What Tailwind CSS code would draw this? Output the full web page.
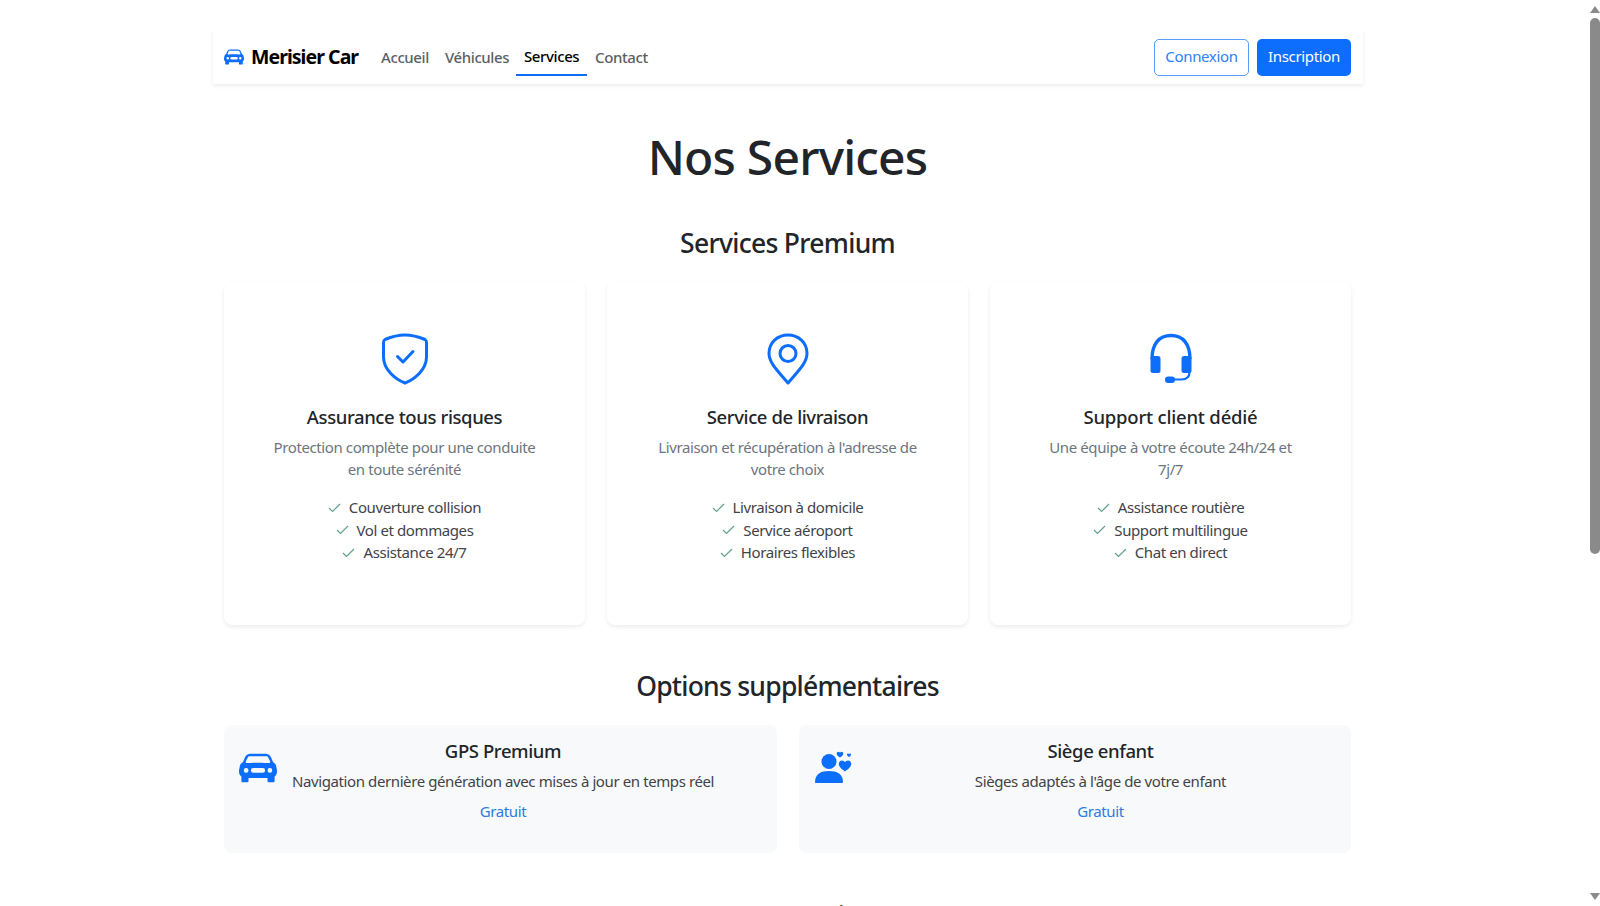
<!doctype html>
<html lang="fr">
<head>
<meta charset="utf-8">
<script src="https://cdn.jsdelivr.net/npm/@tailwindcss/browser@4"></script>
<title>Nos Services</title>
</head>
<body class="bg-white h-[906px] overflow-hidden relative font-['Noto_Sans','Open_Sans',sans-serif] text-[#212529] text-[16px]">
<div class="w-[1150px] ml-[213px]">
  <nav class="mt-[30px] h-[54px] bg-white shadow-[0_2px_4px_rgba(0,0,0,0.08)] flex items-center pl-[11px] pr-[12px]">
    <svg class="w-[20px] h-[20px] text-[#0d6efd]" viewBox="0 0 16 16" fill="currentColor"><path d="M2.52 3.515A2.5 2.5 0 0 1 4.82 2h6.362c1 0 1.904.596 2.298 1.515l.792 1.848c.075.175.21.319.38.404.5.25.855.715.965 1.262l.335 1.679q.05.242.049.49v.413c0 .814-.39 1.543-1 1.997V13.5a.5.5 0 0 1-.5.5h-2a.5.5 0 0 1-.5-.5v-1.338c-1.292.048-2.745.088-4 .088s-2.708-.04-4-.088V13.5a.5.5 0 0 1-.5.5h-2a.5.5 0 0 1-.5-.5v-1.892c-.61-.454-1-1.183-1-1.997v-.413a2.5 2.5 0 0 1 .049-.49l.335-1.68c.11-.546.465-1.012.964-1.261a.8.8 0 0 0 .381-.404l.792-1.848ZM3 10a1 1 0 1 0 0-2 1 1 0 0 0 0 2m10 0a1 1 0 1 0 0-2 1 1 0 0 0 0 2M6 8a1 1 0 0 0 0 2h4a1 1 0 1 0 0-2zM2.906 5.189a.51.51 0 0 0 .497.731c.91-.073 3.35-.17 4.597-.17s3.688.097 4.597.17a.51.51 0 0 0 .497-.731l-.956-1.913A.5.5 0 0 0 11.691 3H4.309a.5.5 0 0 0-.447.276L2.906 5.19Z"/></svg>
    <span class="ml-[7px] w-[108px] text-[19.500px] font-bold text-black tracking-[-0.95px] whitespace-nowrap">Merisier Car</span>
    <div class="ml-[15px] flex h-full text-[15px] font-medium text-[#5c5f62] tracking-[-0.4px]">
      <a class="px-[7px] pb-[2px] flex items-center mt-[10px] h-[36px] w-[63px] whitespace-nowrap">Accueil</a>
      <a class="px-[8px] pb-[2px] flex items-center mt-[10px] h-[36px] w-[79px] whitespace-nowrap">Véhicules</a>
      <a class="px-[8px] pb-[1px] flex items-center mt-[10px] h-[36px] w-[71px] whitespace-nowrap text-black border-b-2 border-[#0d6efd]">Services</a>
      <a class="px-[8px] pb-[2px] flex items-center mt-[10px] h-[36px] whitespace-nowrap">Contact</a>
    </div>
    <div class="ml-auto flex gap-[8px] text-[15px] tracking-[-0.35px]">
      <a class="w-[95px] h-[37px] pb-[1px] rounded-[5px] border border-[#5b9dfb] text-[#2c80f5] flex items-center justify-center">Connexion</a>
      <a class="w-[94px] h-[37px] pb-[1px] rounded-[5px] bg-[#0d6efd] text-white flex items-center justify-center">Inscription</a>
    </div>
  </nav>
  <main class="pl-[11px] pr-[12px]">
    <h1 class="mt-[44px] text-center text-[48px] leading-[58px] font-medium tracking-[-0.8px]">Nos Services</h1>
    <h2 class="mt-[40px] text-center text-[26.500px] leading-[34px] font-medium tracking-[-0.7px]">Services Premium</h2>
    <section class="mt-[22px] grid grid-cols-3 gap-[22px]">
      <article class="h-[343px] rounded-[8px] bg-white shadow-[0_2px_4px_rgba(0,0,0,0.08)] flex flex-col items-center pt-[51px]">
        <svg class="w-[48px] h-[52px]" viewBox="0 0 48 52" fill="none" stroke="#0d6efd" stroke-width="3" stroke-linecap="round" stroke-linejoin="round"><path d="M24 2c6 0 14 2 20 4.500 1.200 .6 1.500 1.500 1.500 3V24c0 12-11 22-21.500 26C13.500 46 2.500 36 2.500 24V9.500c0-1.500.3-2.400 1.500-3C10 4 18 2 24 2Z"/><path d="M16.500 23.500 22 29 32 18.500"/></svg>
        <h3 class="mt-[20px] text-[18.500px] leading-[24px] font-medium tracking-[-0.4px]">Assurance tous risques</h3>
        <p class="mt-[7px] w-[270px] text-center text-[15px] leading-[22px] text-[#6c757d] tracking-[-0.4px]">Protection complète pour une conduite en toute sérénité</p>
        <ul class="mt-[16px] text-[15px] leading-[22.500px] text-[#3f4348] tracking-[-0.4px] text-center">
          <li><svg class="inline w-[13px] h-[13px] mr-[8px] mb-[3px]" viewBox="0 0 13 13" fill="none" stroke="#5fa287" stroke-width="1.200"><path d="M1 7l3.500 3.500L12 3"/></svg>Couverture collision</li>
          <li><svg class="inline w-[13px] h-[13px] mr-[8px] mb-[3px]" viewBox="0 0 13 13" fill="none" stroke="#5fa287" stroke-width="1.200"><path d="M1 7l3.500 3.500L12 3"/></svg>Vol et dommages</li>
          <li><svg class="inline w-[13px] h-[13px] mr-[8px] mb-[3px]" viewBox="0 0 13 13" fill="none" stroke="#5fa287" stroke-width="1.200"><path d="M1 7l3.500 3.500L12 3"/></svg>Assistance 24/7</li>
        </ul>
      </article>
      <article class="h-[343px] rounded-[8px] bg-white shadow-[0_2px_4px_rgba(0,0,0,0.08)] flex flex-col items-center pt-[51px]">
        <svg class="w-[48px] h-[52px]" viewBox="0 0 48 52" fill="none" stroke="#0d6efd" stroke-width="3" stroke-linejoin="round"><path d="M24 50C14 38 5 30 5 20.500 5 9.500 13.500 2 24 2s19 7.500 19 18.500C43 30 34 38 24 50Z"/><circle cx="24" cy="20.500" r="8"/></svg>
        <h3 class="mt-[20px] text-[18.500px] leading-[24px] font-medium tracking-[-0.4px]">Service de livraison</h3>
        <p class="mt-[7px] w-[270px] text-center text-[15px] leading-[22px] text-[#6c757d] tracking-[-0.4px]">Livraison et récupération à l'adresse de votre choix</p>
        <ul class="mt-[16px] text-[15px] leading-[22.500px] text-[#3f4348] tracking-[-0.4px] text-center">
          <li><svg class="inline w-[13px] h-[13px] mr-[8px] mb-[3px]" viewBox="0 0 13 13" fill="none" stroke="#5fa287" stroke-width="1.200"><path d="M1 7l3.500 3.500L12 3"/></svg>Livraison à domicile</li>
          <li><svg class="inline w-[13px] h-[13px] mr-[8px] mb-[3px]" viewBox="0 0 13 13" fill="none" stroke="#5fa287" stroke-width="1.200"><path d="M1 7l3.500 3.500L12 3"/></svg>Service aéroport</li>
          <li><svg class="inline w-[13px] h-[13px] mr-[8px] mb-[3px]" viewBox="0 0 13 13" fill="none" stroke="#5fa287" stroke-width="1.200"><path d="M1 7l3.500 3.500L12 3"/></svg>Horaires flexibles</li>
        </ul>
      </article>
      <article class="h-[343px] rounded-[8px] bg-white shadow-[0_2px_4px_rgba(0,0,0,0.08)] flex flex-col items-center pt-[51px]">
        <svg class="w-[48px] h-[52px]" viewBox="0 0 48 52" fill="#0d6efd"><path d="M5 26C5 11 12 2.500 24 2.500S43 11 43 26" fill="none" stroke="#0d6efd" stroke-width="3.400"/><rect x="3.500" y="23" width="10" height="17" rx="2.500"/><rect x="34.500" y="23" width="10" height="17" rx="2.500"/><path d="M42.500 39c0 5-3 7.500-8 7.500h-8" fill="none" stroke="#0d6efd" stroke-width="2.200"/><rect x="18" y="43.500" width="10" height="6.500" rx="3.250"/></svg>
        <h3 class="mt-[20px] text-[18.500px] leading-[24px] font-medium tracking-[-0.2px]">Support client dédié</h3>
        <p class="mt-[7px] w-[270px] text-center text-[15px] leading-[22px] text-[#6c757d] tracking-[-0.4px]">Une équipe à votre écoute 24h/24 et 7j/7</p>
        <ul class="mt-[16px] text-[15px] leading-[22.500px] text-[#3f4348] tracking-[-0.4px] text-center">
          <li><svg class="inline w-[13px] h-[13px] mr-[8px] mb-[3px]" viewBox="0 0 13 13" fill="none" stroke="#5fa287" stroke-width="1.200"><path d="M1 7l3.500 3.500L12 3"/></svg>Assistance routière</li>
          <li><svg class="inline w-[13px] h-[13px] mr-[8px] mb-[3px]" viewBox="0 0 13 13" fill="none" stroke="#5fa287" stroke-width="1.200"><path d="M1 7l3.500 3.500L12 3"/></svg>Support multilingue</li>
          <li><svg class="inline w-[13px] h-[13px] mr-[8px] mb-[3px]" viewBox="0 0 13 13" fill="none" stroke="#5fa287" stroke-width="1.200"><path d="M1 7l3.500 3.500L12 3"/></svg>Chat en direct</li>
        </ul>
      </article>
    </section>
    <h2 class="mt-[44px] text-center text-[26.500px] leading-[34px] font-medium tracking-[-0.75px]">Options supplémentaires</h2>
    <section class="mt-[22px] grid grid-cols-2 gap-[22px]">
      <article class="h-[128px] rounded-[8px] bg-[#f8f9fa] flex pl-[15px] pt-[14px]">
        <svg class="w-[38px] h-[38px] mt-[10px] shrink-0 text-[#0d6efd]" viewBox="0 0 16 16" fill="currentColor"><path d="M2.520 3.515A2.500 2.500 0 0 1 4.820 2h6.362c1 0 1.904.596 2.298 1.515l.792 1.848c.075.175.21.319.38.404.5.25.855.715.965 1.262l.335 1.679q.05.242.049.49v.413c0 .814-.39 1.543-1 1.997V13.500a.5.5 0 0 1-.5.5h-2a.5.5 0 0 1-.5-.5v-1.338c-1.292.048-2.745.088-4 .088s-2.708-.04-4-.088V13.500a.5.5 0 0 1-.5.5h-2a.5.5 0 0 1-.5-.5v-1.892c-.61-.454-1-1.183-1-1.997v-.413a2.500 2.500 0 0 1 .049-.49l.335-1.680c.11-.546.465-1.012.964-1.261a.8.8 0 0 0 .381-.404l.792-1.848ZM3 10a1 1 0 1 0 0-2 1 1 0 0 0 0 2m10 0a1 1 0 1 0 0-2 1 1 0 0 0 0 2M6 8a1 1 0 0 0 0 2h4a1 1 0 1 0 0-2zM2.906 5.189a.51.51 0 0 0 .497.731c.91-.073 3.350-.17 4.597-.17s3.688.097 4.597.17a.51.51 0 0 0 .497-.731l-.956-1.913A.5.5 0 0 0 11.691 3H4.309a.5.5 0 0 0-.447.276L2.906 5.190Z"/></svg>
        <div class="w-[422px] ml-[15px] text-center">
          <h4 class="text-[18.500px] leading-[24px] font-medium tracking-[-0.4px]">GPS Premium</h4>
          <p class="mt-[7px] text-[15px] leading-[22.500px] text-[#3f4348] tracking-[-0.4px] whitespace-nowrap">Navigation dernière génération avec mises à jour en temps réel</p>
          <p class="mt-[7px] text-[15px] leading-[22.500px] text-[#2c7be5] tracking-[-0.4px]">Gratuit</p>
        </div>
      </article>
      <article class="h-[128px] rounded-[8px] bg-[#f8f9fa] flex pl-[15px] pt-[14px]">
        <svg class="w-[38px] h-[38px] mt-[10px] shrink-0" viewBox="0 0 38 38" fill="#0d6efd"><circle cx="15" cy="12.500" r="7.500"/><path d="M1 33c0-8 6-11 14-11s14 3 14 11c0 .8-.5 1-1 1H2c-.5 0-1-.2-1-1Z"/><path d="M31 22.500c-3-2.200-6.200-4.500-6.200-7.700 0-2 1.500-3.300 3.200-3.300 1.300 0 2.400.7 3 1.800.6-1.100 1.700-1.800 3-1.800 1.700 0 3.200 1.300 3.200 3.300 0 3.200-3.200 5.500-6.200 7.700Z"/><path d="M26 8.500c-1.600-1.100-3.300-2.300-3.300-4 0-1.100.8-1.800 1.700-1.800.7 0 1.300.3 1.600 1 .3-.7.900-1 1.600-1 .9 0 1.700.7 1.700 1.800 0 1.700-1.700 2.900-3.300 4Z"/><path d="M35 8c-1-.7-2-1.400-2-2.500 0-.7.500-1.100 1-1.100.4 0 .8.200 1 .6.200-.4.600-.6 1-.6.500 0 1 .4 1 1.100 0 1.100-1 1.800-2 2.500Z"/></svg>
        <div class="w-[468px] ml-[15px] text-center">
          <h4 class="text-[18.500px] leading-[24px] font-medium tracking-[-0.4px]">Siège enfant</h4>
          <p class="mt-[7px] text-[15px] leading-[22.500px] text-[#3f4348] tracking-[-0.4px]">Sièges adaptés à l'âge de votre enfant</p>
          <p class="mt-[7px] text-[15px] leading-[22.500px] text-[#2c7be5] tracking-[-0.4px]">Gratuit</p>
        </div>
      </article>
    </section>
    <h2 class="mt-[46px] text-center text-[26.500px] leading-[34px] font-medium tracking-[-0.7px]">Nos garanties</h2>
  </main>
</div>
<div class="absolute top-0 right-0 bottom-0 w-[17px] bg-white flex flex-col items-end">
  <div class="mt-[6px] w-0 h-0 border-x-[5.500px] border-x-transparent border-b-[7px] border-b-[#8a8a8a]"></div>
  <div class="mt-[5px] w-[10px] h-[536px] rounded-[5px] bg-[#8a8a8a]"></div>
  <div class="mt-auto mb-[6px] w-0 h-0 border-x-[5.500px] border-x-transparent border-t-[7px] border-t-[#8a8a8a]"></div>
</div>
</body>
</html>
